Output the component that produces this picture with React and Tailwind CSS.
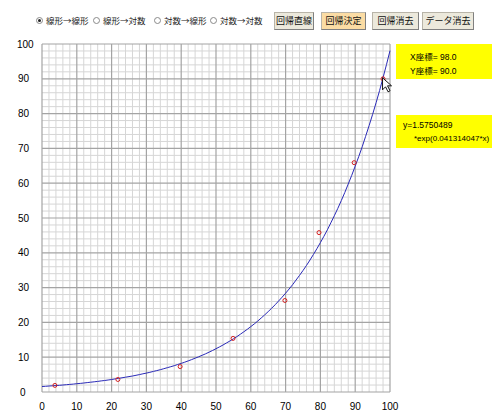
const FONT = { fontFamily: '"Liberation Sans", "Noto Sans CJK JP", sans-serif' };
const CJK = { fontFamily: '"Noto Sans CJK JP", "Liberation Sans", sans-serif' };

const modes = [
  { label: "線形→線形", w: "w-[57px]", checked: true },
  { label: "線形→対数", w: "w-[61px]" },
  { label: "対数→線形", w: "w-[56px]" },
  { label: "対数→対数", w: "w-[61px]" },
];

const buttons = [
  { label: "回帰直線", cls: "w-[40px] ml-[3px] bg-[#ece9dc]" },
  { label: "回帰決定", cls: "w-[45px] ml-[7px] bg-[#fbdca4]" },
  { label: "回帰消去", cls: "w-[47px] ml-[6px] bg-[#ece9dc]" },
  { label: "データ消去", cls: "w-[52px] ml-[3px] bg-[#ece9dc]" },
];

// data points picked on the chart
const points = [
  [3.7, 1.9], [21.8, 3.6], [39.7, 7.3], [54.9, 15.4],
  [69.8, 26.3], [79.6, 45.8], [89.7, 65.9], [98, 90],
];

const L = 42, T = 8, S = 3.48;
const px = (x) => L + x * S;
const py = (y) => T + (100 - y) * S;

function Chart() {
  const ticks = [];
  for (let v = 0; v <= 100; v += 2) ticks.push(v);
  const curve = [];
  for (let x = 0; x <= 100; x += 1) {
    const y = 1.5750489 * Math.exp(0.041314047 * x);
    curve.push(`${px(x).toFixed(1)},${py(y).toFixed(1)}`);
  }

  return (
    <svg width="396" height="383" className="block shrink-0 overflow-visible" style={FONT}>
      {/* minor grid */}
      {ticks.filter((v) => v % 10 !== 0).map((v) => (
        <g key={"m" + v} stroke="#d6d6d6" strokeWidth="1">
          <line x1={px(v)} y1={T} x2={px(v)} y2={py(0)} />
          <line x1={L} y1={py(v)} x2={px(100)} y2={py(v)} />
        </g>
      ))}
      {/* major grid */}
      {ticks.filter((v) => v % 10 === 0).map((v) => (
        <g key={"M" + v} stroke="#a4a4a4" strokeWidth="1.2">
          <line x1={px(v)} y1={T} x2={px(v)} y2={py(0)} />
          <line x1={L} y1={py(v)} x2={px(100)} y2={py(v)} />
        </g>
      ))}

      {/* axis labels */}
      {ticks.filter((v) => v % 10 === 0).map((v) => (
        <g key={"t" + v} fontSize="10" fill="#000">
          <text x={v === 100 ? 17 : v === 0 ? 20 : 18} y={py(v) + 3.5}>{v}</text>
          <text x={px(v)} y={374} textAnchor="middle">{v}</text>
        </g>
      ))}

      {/* regression curve */}
      <polyline points={curve.join(" ")} fill="none" stroke="#2a2ab8" strokeWidth="1" />

      {/* data */}
      {points.map(([x, y], i) => (
        <circle key={i} cx={px(x)} cy={py(y)} r="2" fill="none" stroke="#d42020" strokeWidth="1" />
      ))}

      {/* mouse pointer */}
      <path
        d="M0 0 L0 12 L3 9 L5.5 14 L7.5 13 L5 8 L9 8 Z"
        transform={`translate(${px(98) - 0.5}, ${py(90) - 1})`}
        fill="#fff"
        stroke="#000"
        strokeWidth="0.9"
        strokeLinejoin="round"
      />
    </svg>
  );
}

export default function App() {
  return (
    <div className="w-[500px] h-[419px] bg-white overflow-hidden text-black" style={FONT}>
      {/* toolbar */}
      <div className="flex items-center h-[36px] pl-[36px] pt-[5px]">
        {modes.map((m) => (
          <label key={m.label} className={`flex items-center gap-[3px] ${m.w} text-[8.5px] text-[#222] whitespace-nowrap`} style={CJK}>
            <span className="flex items-center justify-center w-[7px] h-[7px] rounded-full border border-[#8a8a8a] bg-white">
              {m.checked && <span className="w-[3px] h-[3px] rounded-full bg-[#222]" />}
            </span>
            <span>{m.label}</span>
          </label>
        ))}
        {buttons.map((b) => (
          <button
            key={b.label}
            style={CJK}
            className={`${b.cls} h-[18px] flex items-center justify-center text-[9px] text-[#111] border border-[#b8b4a8] border-r-[#808080] border-b-[#808080] whitespace-nowrap`}
          >
            {b.label}
          </button>
        ))}
      </div>

      <div className="flex">
        <Chart />
        <div className="flex flex-col">
          <div className="mt-[8px] w-[96px] h-[35px] bg-[#ffff00] text-[8.5px] pl-[14px] pt-[6px] leading-[14px] whitespace-nowrap">
            <div>X座標= 98.0</div>
            <div>Y座標= 90.0</div>
          </div>
          <div className="mt-[36px] w-[96px] h-[33px] bg-[#ffff00] text-[8.5px] pl-[7px] pt-[3px] leading-[14px] whitespace-nowrap">
            <div>y=1.5750489</div>
            <div className="pl-[11px] text-[8px]">*exp(0.041314047*x)</div>
          </div>
        </div>
      </div>
    </div>
  );
}
